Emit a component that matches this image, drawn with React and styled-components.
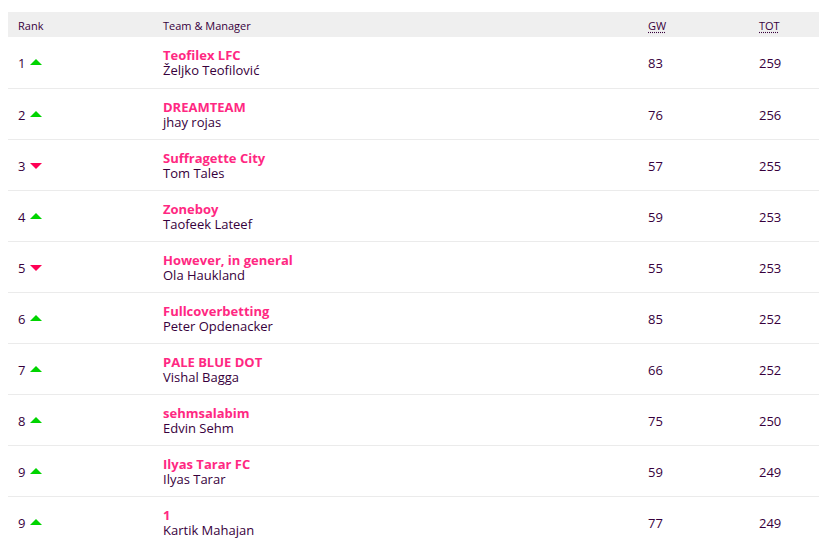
import React from "react";
import styled, { createGlobalStyle } from "styled-components";

const Global = createGlobalStyle`
  html, body { margin: 0; padding: 0; background: #fff; }
  body { padding: 12px 0 0 8px; font-family: "Open Sans", "Lato", sans-serif; color: #37003c; overflow: hidden; }
`;

const Table = styled.table`
  width: 811px;
  border-collapse: collapse;
  table-layout: fixed;
`;

const HeadRow = styled.tr`
  background: #efefef;
  height: 25px;
`;

const Th = styled.th`
  text-align: left;
  font-weight: 400;
  font-size: 11px;
  color: #37003c;
  padding: 2px 0 0 10px;
  width: ${(p) => (p.$w ? `${p.$w - 10}px` : "auto")};
`;

const Abbr = styled.abbr`
  text-decoration: underline dotted;
  text-underline-offset: 2px;
  cursor: help;
`;

const Row = styled.tr`
  height: 51px;
  border-bottom: 1px solid #ebebeb;
  &:last-child { border-bottom: none; }
`;

const Td = styled.td`
  padding: 2px 0 0 10px;
  font-size: 13px;
  color: #37003c;
  vertical-align: middle;
`;

const RankCell = styled.div`
  display: flex;
  align-items: center;
  gap: 5px;
`;

const Arrow = styled.span`
  display: inline-block;
  width: 0;
  height: 0;
  border-left: 6px solid transparent;
  border-right: 6px solid transparent;
  ${(p) =>
    p.$up
      ? "border-bottom: 6px solid #00d400; margin-top: -2px;"
      : "border-top: 6px solid #ff0055; margin-top: 0px;"}
`;

const TeamName = styled.div`
  font-weight: 700;
  color: #ff2882;
  line-height: 15px;
`;

const Manager = styled.div`
  line-height: 15px;
`;

const rows = [
  [1, true, "Teofilex LFC", "Željko Teofilović", 83, 259],
  [2, true, "DREAMTEAM", "jhay rojas", 76, 256],
  [3, false, "Suffragette City", "Tom Tales", 57, 255],
  [4, true, "Zoneboy", "Taofeek Lateef", 59, 253],
  [5, false, "However, in general", "Ola Haukland", 55, 253],
  [6, true, "Fullcoverbetting", "Peter Opdenacker", 85, 252],
  [7, true, "PALE BLUE DOT", "Vishal Bagga", 66, 252],
  [8, true, "sehmsalabim", "Edvin Sehm", 75, 250],
  [9, true, "Ilyas Tarar FC", "Ilyas Tarar", 59, 249],
  [9, true, "1", "Kartik Mahajan", 77, 249],
];

export default function App() {
  return (
    <>
      <Global />
      <Table>
        <thead>
          <HeadRow>
            <Th $w={145}>Rank</Th>
            <Th $w={485}>Team &amp; Manager</Th>
            <Th $w={111}>
              <Abbr title="Gameweek">GW</Abbr>
            </Th>
            <Th>
              <Abbr title="Total">TOT</Abbr>
            </Th>
          </HeadRow>
        </thead>
        <tbody>
          {rows.map(([rank, up, team, mgr, gw, tot], i) => (
            <Row key={i}>
              <Td>
                <RankCell>
                  {rank}
                  <Arrow $up={up} />
                </RankCell>
              </Td>
              <Td>
                <TeamName>{team}</TeamName>
                <Manager>{mgr}</Manager>
              </Td>
              <Td>{gw}</Td>
              <Td>{tot}</Td>
            </Row>
          ))}
        </tbody>
      </Table>
    </>
  );
}
